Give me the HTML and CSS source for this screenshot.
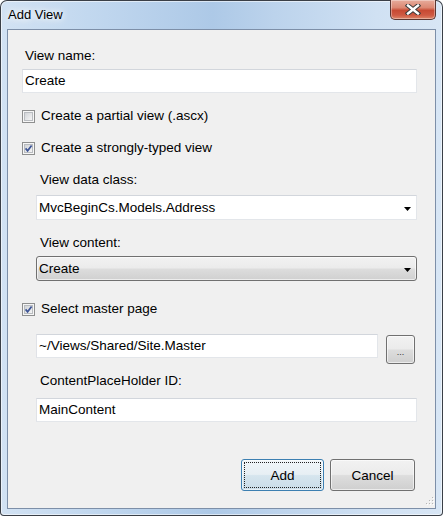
FILE: index.html
```html
<!DOCTYPE html>
<html>
<head>
<meta charset="utf-8">
<title>Add View</title>
<link rel="stylesheet" href="styles.css">
</head>
<body>
<div class="window">
  <div class="titlebar">
    <span class="title">Add View</span>
    <div class="close">
      <svg width="16" height="11" viewBox="0 0 16 11">
        <path d="M3 1.5 L13 9.5 M13 1.5 L3 9.5" stroke="#3a3a3a" stroke-width="4.4" stroke-linecap="square" fill="none"/>
        <path d="M3 1.5 L13 9.5 M13 1.5 L3 9.5" stroke="#ffffff" stroke-width="2.4" stroke-linecap="square" fill="none"/>
      </svg>
    </div>
  </div>
  <div class="client">
    <div class="label">View name:</div>
    <div class="textbox tb-name">Create</div>

    <div class="check cb-first">
      <svg class="box" width="13" height="13" viewBox="0 0 13 13">
        <defs><linearGradient id="g1" x1="0" y1="0" x2="1" y2="1"><stop offset="0" stop-color="#cfd2d6"/><stop offset="1" stop-color="#f7f7f7"/></linearGradient></defs>
        <rect x="0.5" y="0.5" width="12" height="12" fill="#f6f6f6" stroke="#8e8f8f"/>
        <rect x="2.5" y="2.5" width="8" height="8" fill="url(#g1)" stroke="#b9bcc0"/>
      </svg>
      <span>Create a partial view (.ascx)</span>
    </div>

    <div class="check cb-next">
      <svg class="box" width="13" height="13" viewBox="0 0 13 13">
        <defs><linearGradient id="g2" x1="0" y1="0" x2="1" y2="1"><stop offset="0" stop-color="#cfd2d6"/><stop offset="1" stop-color="#f7f7f7"/></linearGradient></defs>
        <rect x="0.5" y="0.5" width="12" height="12" fill="#f6f6f6" stroke="#8e8f8f"/>
        <rect x="2.5" y="2.5" width="8" height="8" fill="url(#g2)" stroke="#b9bcc0"/>
        <path d="M3.6 6.4 L5.6 8.8 L9.6 3.4" stroke="#3e5596" stroke-width="1.7" fill="none"/>
      </svg>
      <span>Create a strongly-typed view</span>
    </div>

    <div class="indent">
      <div class="label ind-label first-ind">View data class:</div>
      <div class="combo combo-edit">
        <span>MvcBeginCs.Models.Address</span>
        <svg class="arrow" width="7" height="4" viewBox="0 0 7 4"><polygon points="0,0 7,0 3.5,4" fill="#000"/></svg>
      </div>
      <div class="label ind-label second-ind">View content:</div>
      <div class="combo combo-list">
        <span>Create</span>
        <svg class="arrow" width="7" height="4" viewBox="0 0 7 4"><polygon points="0,0 7,0 3.5,4" fill="#000"/></svg>
      </div>
    </div>

    <div class="check cb-master">
      <svg class="box" width="13" height="13" viewBox="0 0 13 13">
        <defs><linearGradient id="g3" x1="0" y1="0" x2="1" y2="1"><stop offset="0" stop-color="#cfd2d6"/><stop offset="1" stop-color="#f7f7f7"/></linearGradient></defs>
        <rect x="0.5" y="0.5" width="12" height="12" fill="#f6f6f6" stroke="#8e8f8f"/>
        <rect x="2.5" y="2.5" width="8" height="8" fill="url(#g3)" stroke="#b9bcc0"/>
        <path d="M3.6 6.4 L5.6 8.8 L9.6 3.4" stroke="#3e5596" stroke-width="1.7" fill="none"/>
      </svg>
      <span>Select master page</span>
    </div>

    <div class="indent">
      <div class="master-row">
        <div class="textbox tb-master">~/Views/Shared/Site.Master</div>
        <div class="browse">...</div>
      </div>
      <div class="label ind-label third-ind">ContentPlaceHolder ID:</div>
      <div class="textbox tb-content">MainContent</div>
    </div>

    <div class="buttons">
      <div class="btn btn-add"><div class="focus">Add</div></div>
      <div class="btn btn-cancel">Cancel</div>
    </div>

    <svg class="grip" width="10" height="10" viewBox="0 0 10 10">
      <rect x="8" y="0" width="1" height="1" fill="#b5b5b5"/>
      <rect x="5" y="3" width="1" height="1" fill="#b5b5b5"/>
      <rect x="8" y="3" width="1" height="1" fill="#b5b5b5"/>
      <rect x="2" y="6" width="1" height="1" fill="#b5b5b5"/>
      <rect x="5" y="6" width="1" height="1" fill="#b5b5b5"/>
      <rect x="8" y="6" width="1" height="1" fill="#b5b5b5"/>
      <rect x="9" y="1" width="1" height="1" fill="#ffffff"/>
      <rect x="6" y="4" width="1" height="1" fill="#ffffff"/>
      <rect x="9" y="4" width="1" height="1" fill="#ffffff"/>
      <rect x="3" y="7" width="1" height="1" fill="#ffffff"/>
      <rect x="6" y="7" width="1" height="1" fill="#ffffff"/>
      <rect x="9" y="7" width="1" height="1" fill="#ffffff"/>
    </svg>
  </div>
</div>
</body>
</html>
```

FILE: styles.css
```css
* {
  box-sizing: border-box;
}

html, body {
  margin: 0;
  padding: 0;
  background: #ffffff;
}

body {
  font-family: "Liberation Sans", Arial, sans-serif;
  font-size: 13px;
  color: #000;
}

.window {
  width: 443px;
  height: 516px;
  display: flex;
  flex-direction: column;
  border-radius: 7px 7px 4px 4px;
  overflow: hidden;
  background: linear-gradient(90deg, #d2e2f3 0%, #c2d8ef 20%, #adc9e7 48%, #bcd3ec 62%, #d0e1f3 85%, #d8e6f5 100%);
  box-shadow: inset 0 0 0 1px #3a3f47, inset 0 0 0 2px rgba(255, 255, 255, 0.55);
}

.titlebar {
  height: 29px;
  flex: none;
  display: flex;
  justify-content: space-between;
  align-items: flex-start;
  padding: 0 7px 0 8px;
}

.title {
  margin-top: 6px;
  line-height: 18px;
  text-shadow: 0 0 6px #ffffff, 0 0 10px #ffffff;
}

.close {
  width: 46px;
  height: 20px;
  border: 1px solid #5a3631;
  border-top: none;
  border-radius: 0 0 5px 5px;
  background: linear-gradient(#e7ac9c 0%, #dc8873 40%, #c74a33 55%, #cf5a43 80%, #dd8669 100%);
  box-shadow: inset 0 0 0 1px rgba(255, 255, 255, 0.35);
  display: flex;
  align-items: center;
  justify-content: center;
}

.client {
  flex: 1;
  margin: 0 7px 7px 7px;
  border: 1px solid #7d8fa8;
  background: #f0f0f0;
  display: flex;
  flex-direction: column;
  padding: 17px 18px 17px 14px;
  position: relative;
  font-size: 13.5px;
}

.label {
  line-height: 18px;
  margin-left: 3px;
}

.textbox {
  background: #fff;
  border: 1px solid;
  border-color: #d2d6dc #e3e6ea #e3e6ea #e0e2e7;
  height: 24px;
  line-height: 22px;
  padding-left: 2px;
  white-space: nowrap;
}

.tb-name {
  margin-top: 4px;
}

.check {
  display: flex;
  align-items: center;
  gap: 6px;
  height: 18px;
  line-height: 18px;
}

.check .box {
  flex: none;
}

.cb-first {
  margin-top: 14px;
}

.cb-next {
  margin-top: 14px;
}

.cb-master {
  margin-top: 19px;
}

.indent {
  display: flex;
  flex-direction: column;
  padding-left: 14px;
}

.ind-label {
  margin-left: 4px;
}

.first-ind {
  margin-top: 14px;
}

.second-ind {
  margin-top: 14px;
}

.third-ind {
  margin-top: 8px;
}

.combo {
  height: 25px;
  display: flex;
  align-items: center;
  justify-content: space-between;
  padding: 0 5px 0 2px;
}

.combo .arrow {
  margin-top: 3px;
}

.combo-edit {
  margin-top: 6px;
  background: #fff;
  border: 1px solid;
  border-color: #d2d6dc #e3e6ea #e3e6ea #e0e2e7;
}

.combo-list {
  margin-top: 4px;
  border: 1px solid #707070;
  border-radius: 3px;
  background: linear-gradient(#f2f2f2 0%, #ebebeb 48%, #dddddd 52%, #d0d0d0 100%);
  box-shadow: inset 0 0 0 1px rgba(255, 255, 255, 0.6);
}

.master-row {
  margin-top: 16px;
  display: flex;
  align-items: flex-start;
  gap: 8px;
}

.tb-master {
  width: 342px;
}

.browse {
  margin-top: 1px;
  width: 29px;
  height: 29px;
  border: 1px solid #707070;
  border-radius: 3px;
  background: linear-gradient(#f2f2f2 0%, #ebebeb 48%, #dddddd 52%, #cfcfcf 100%);
  box-shadow: inset 0 0 0 1px rgba(255, 255, 255, 0.6);
  display: flex;
  align-items: center;
  justify-content: center;
  font-size: 9px;
  line-height: 9px;
  padding-top: 5px;
  color: #333;
}

.tb-content {
  margin-top: 8px;
}

.buttons {
  margin-top: auto;
  display: flex;
  justify-content: flex-end;
  gap: 6px;
  padding-right: 2px;
}

.btn {
  height: 32px;
  border-radius: 3px;
  display: flex;
  align-items: center;
  justify-content: center;
}

.btn-add {
  width: 83px;
  padding: 2px;
  border: 1px solid #3c7fb1;
  background: linear-gradient(#f1f6f9 0%, #e7eff4 48%, #d6e5ee 52%, #c9dce8 100%);
  box-shadow: inset 0 0 0 1px rgba(255, 255, 255, 0.55);
}

.focus {
  width: 100%;
  height: 100%;
  border: 1px dotted #222;
  display: flex;
  align-items: center;
  justify-content: center;
}

.btn-cancel {
  width: 85px;
  border: 1px solid #707070;
  background: linear-gradient(#f2f2f2 0%, #ebebeb 48%, #dddddd 52%, #cfcfcf 100%);
  box-shadow: inset 0 0 0 1px rgba(255, 255, 255, 0.6);
}

.grip {
  position: absolute;
  right: 1px;
  bottom: 1px;
}
```
